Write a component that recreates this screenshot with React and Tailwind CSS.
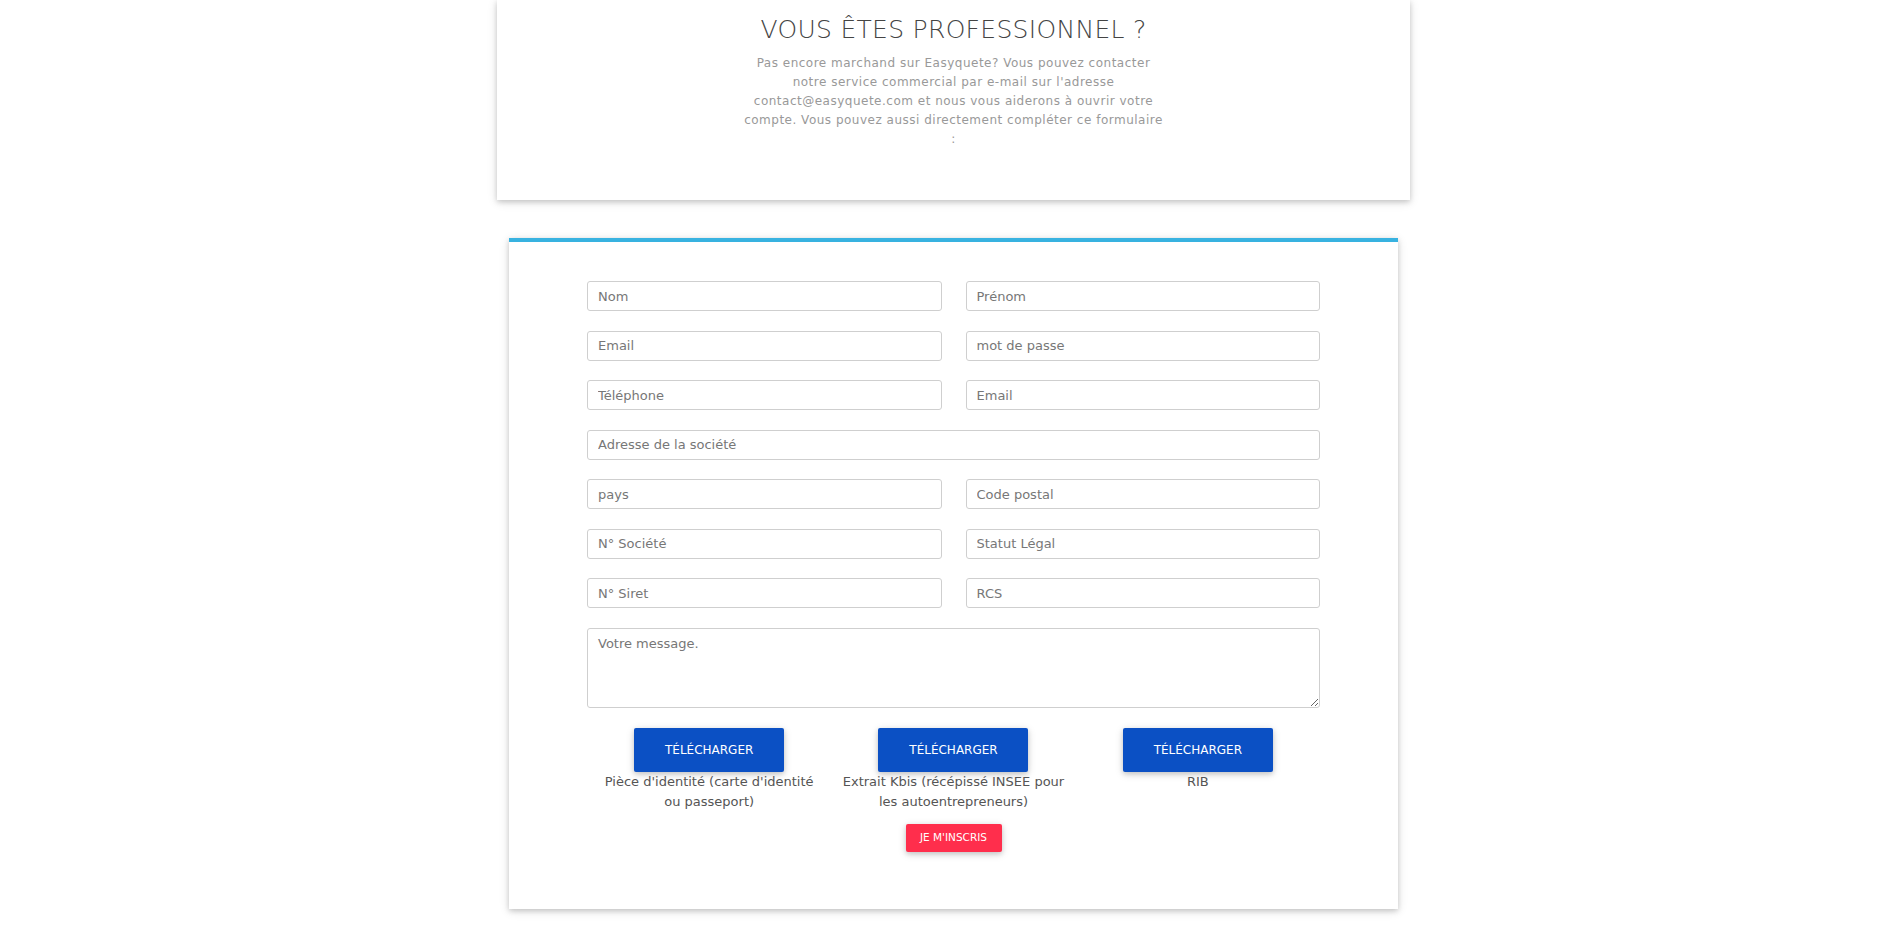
import React from 'react';

const cardShadow = 'shadow-[0_2px_5px_0_rgba(0,0,0,0.16),0_2px_10px_0_rgba(0,0,0,0.12)]';

const Field = ({ placeholder, full }) => (
    <input
        type="text"
        placeholder={placeholder}
        className={`${full ? 'col-span-2' : ''} h-[30px] w-full rounded-[3px] border border-[#cfcfcf] bg-white px-[10px] text-[13px] text-[#555] placeholder:text-[#777] outline-none`}
    />
);

const Upload = ({ label }) => (
    <div className="flex flex-col items-center px-[10px]">
        <button className="h-[44px] w-[150px] rounded-[2px] bg-[#0b50c4] text-[12px] uppercase text-white shadow-[0_2px_5px_0_rgba(0,0,0,0.16),0_2px_10px_0_rgba(0,0,0,0.12)]">
            Télécharger
        </button>
        <p className="text-center text-[13px] leading-[20px] text-[#555]">{label}</p>
    </div>
);

const App = () => {
    return (
        <div className="min-h-[930px] bg-white pb-[22px] pl-[3px] font-['DejaVu_Sans',sans-serif]">
            {/* intro card */}
            <section className={`mx-auto flex h-[200px] w-[913px] flex-col items-center bg-white pt-[14px] ${cardShadow}`}>
                <h2 className="text-[25px] font-extralight leading-[32px] tracking-[0.3px] text-[#444]">
                    VOUS ÊTES PROFESSIONNEL ?
                </h2>
                <p className="mt-[8px] w-[419px] text-center text-[12px] leading-[19px] tracking-[0.5px] text-[#999]">
                    Pas encore marchand sur Easyquete? Vous pouvez contacter notre service commercial par e-mail sur l'adresse contact@easyquete.com et nous vous aiderons à ouvrir votre compte. Vous pouvez aussi directement compléter ce formulaire :
                </p>
            </section>

            {/* form card */}
            <section className={`mx-auto mt-[38px] w-[889px] border-t-4 border-[#38b2e0] bg-white px-[78px] pb-[57px] pt-[39px] ${cardShadow}`}>
                <form className="grid grid-cols-2 gap-x-[24px] gap-y-[19.5px]">
                    <Field placeholder="Nom" />
                    <Field placeholder="Prénom" />
                    <Field placeholder="Email" />
                    <Field placeholder="mot de passe" />
                    <Field placeholder="Téléphone" />
                    <Field placeholder="Email" />
                    <Field placeholder="Adresse de la société" full />
                    <Field placeholder="pays" />
                    <Field placeholder="Code postal" />
                    <Field placeholder="N° Société" />
                    <Field placeholder="Statut Légal" />
                    <Field placeholder="N° Siret" />
                    <Field placeholder="RCS" />
                    <textarea
                        placeholder="Votre message."
                        className="col-span-2 h-[80px] w-full rounded-[3px] border border-[#cfcfcf] px-[10px] py-[5px] text-[13px] text-[#555] placeholder:text-[#777] outline-none"
                    />
                </form>

                <div className="mt-[20px] grid grid-cols-3">
                    <Upload label="Pièce d'identité (carte d'identité ou passeport)" />
                    <Upload label="Extrait Kbis (récépissé INSEE pour les autoentrepreneurs)" />
                    <Upload label="RIB" />
                </div>

                <div className="mt-[12px] flex justify-center">
                    <button className="h-[28px] w-[96px] rounded-[2px] bg-[#ff2e4c] text-[10.5px] uppercase text-white shadow-[0_2px_5px_0_rgba(0,0,0,0.16),0_2px_10px_0_rgba(0,0,0,0.12)]">
                        Je m'inscris
                    </button>
                </div>
            </section>
        </div>
    );
};

export default App;
